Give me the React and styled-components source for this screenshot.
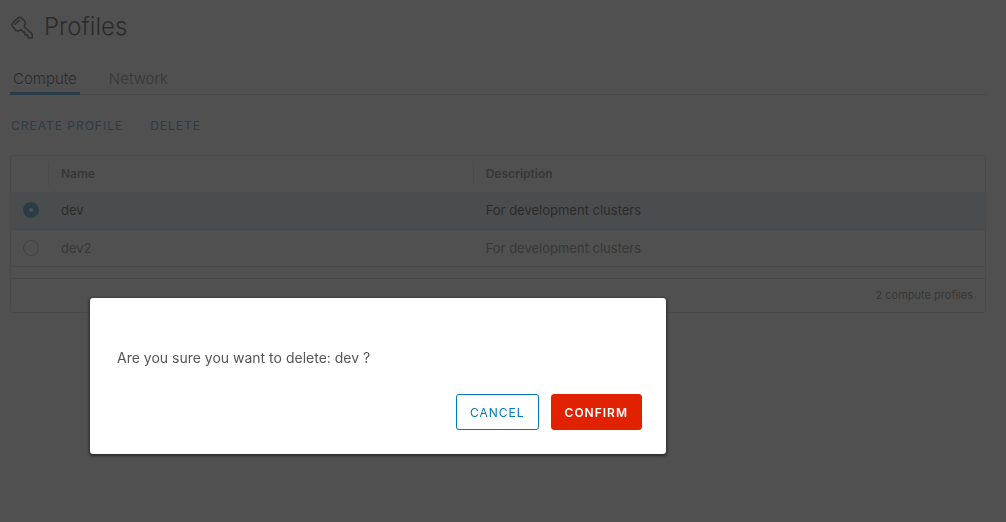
import React, { useState } from "react";
import styled, { createGlobalStyle } from "styled-components";

const GlobalStyle = createGlobalStyle`
  * { box-sizing: border-box; }
  body {
    margin: 0;
    background: #fafafa;
    color: #565656;
    font-family: Inter, "Open Sans", sans-serif;
    font-size: 13px;
    font-weight: 400;
  }
  button, input { font-family: inherit; }
`;

const Page = styled.main`
  padding: 12px 20px 0 10px;
`;

const Title = styled.h1`
  display: flex;
  align-items: center;
  gap: 9px;
  margin: 0;
  color: #000;
  font-size: 24px;
  font-weight: 300;
  line-height: 30px;
`;

const KeyIcon = styled.svg`
  width: 25px;
  height: 25px;
  fill: none;
  stroke: #222;
  stroke-width: 1.5;
  stroke-linejoin: round;
  stroke-linecap: round;
`;

const Tabs = styled.div`
  display: flex;
  gap: 26px;
  margin-top: 22px;
  border-bottom: 1px solid #ccc;
`;

const Tab = styled.button`
  height: 31px;
  margin-bottom: -1px;
  padding: 2px 3px 0;
  border: 0;
  border-bottom: 3px solid ${(p) => (p["aria-selected"] ? "#0079b8" : "transparent")};
  background: none;
  color: ${(p) => (p["aria-selected"] ? "#000" : "#565656")};
  font-size: 15px;
  font-weight: 300;
  line-height: 26px;
`;

const Toolbar = styled.div`
  display: flex;
  gap: 26px;
  margin-top: 12px;
`;

const LinkButton = styled.button`
  height: 36px;
  padding: 0 0 0 1px;
  border: 0;
  background: none;
  color: #0079b8;
  font-size: 12px;
  letter-spacing: 1px;
`;

const Grid = styled.section`
  margin-top: 12px;
  border: 1px solid #ccc;
  border-radius: 3px;
`;

const Table = styled.table`
  width: 100%;
  border-collapse: collapse;
  table-layout: fixed;
  text-align: left;
`;

const SelectCol = styled.col`
  width: 37px;
`;

const NameCol = styled.col`
  width: 43.6%;
`;

const HeadCell = styled.th`
  height: 36px;
  padding: 0;
  font-size: 12px;
  font-weight: 600;
`;

const HeadLabel = styled.div`
  height: 24px;
  padding-left: 12px;
  border-left: 1px solid #dedede;
  line-height: 24px;
`;

const Row = styled.tr`
  height: 37px;
  border-bottom: 1px solid #ccc;
  background: ${(p) => (p.$selected ? "#d9e4ea" : "transparent")};
  color: ${(p) => (p.$selected ? "#000" : "#565656")};
`;

const Cell = styled.td`
  padding: 0 13px;
  font-weight: 400;

  &:first-child {
    padding: 0 0 0 12px;
  }
`;

const Radio = styled.input`
  appearance: none;
  display: block;
  width: 16px;
  height: 16px;
  margin: 0;
  border: 1px solid #9a9a9a;
  border-radius: 50%;
  &:checked {
    border: 6px solid #0079b8;
    background: #fff;
  }
`;

const GridFooter = styled.footer`
  height: 34px;
  margin-top: 11px;
  padding: 0 12px;
  border-top: 1px solid #bbb;
  font-size: 11px;
  line-height: 33px;
  text-align: right;
`;

const Overlay = styled.div`
  position: fixed;
  inset: 0;
  padding: 298px 16px 0 90px;
  background: rgba(49, 49, 49, 0.85);
`;

const Modal = styled.div`
  max-width: 576px;
  padding: 48px 24px 24px 27px;
  border-radius: 3px;
  background: #fff;
  box-shadow: 0 1px 3px 1px rgba(0, 0, 0, 0.5);
`;

const Message = styled.p`
  margin: 0 0 24px;
  font-size: 14px;
  line-height: 24px;
`;

const Actions = styled.div`
  display: flex;
  justify-content: flex-end;
  gap: 12px;
`;

const Button = styled.button`
  height: 36px;
  padding: 0 13px;
  border: 1px solid ${(p) => (p.$danger ? "#e12200" : "#0079b8")};
  border-radius: 3px;
  background: ${(p) => (p.$danger ? "#e12200" : "#fff")};
  color: ${(p) => (p.$danger ? "#fff" : "#0079b8")};
  font-size: 12px;
  font-weight: ${(p) => (p.$danger ? 600 : 400)};
  letter-spacing: 1px;
`;

const profiles = [
  { name: "dev", description: "For development clusters" },
  { name: "dev2", description: "For development clusters" },
];

export default function App() {
  const [selected, setSelected] = useState("dev");
  return (
    <>
      <GlobalStyle />
      <Page>
        <Title>
          <KeyIcon viewBox="0 0 25 25" aria-hidden="true">
            <path d="M2.6 8.2 8.1 2.9Q9.3 1.8 10.7 2.6L14.8 6.2Q15.7 7.2 15.2 8.5L14.2 11.8 22.2 19V23H18.9L17.5 21.5V19.7H15.5L14.7 18.9V17L13.3 17.1 11.2 14.8 8 16Q6.7 16.3 5.8 15.2L2.2 11Q1.3 9.6 2.6 8.2Z" />
            <path d="M5.2 9.2 9.2 5.5" />
          </KeyIcon>
          Profiles
        </Title>
        <Tabs role="tablist">
          <Tab role="tab" aria-selected={true}>Compute</Tab>
          <Tab role="tab" aria-selected={false}>Network</Tab>
        </Tabs>
        <Toolbar>
          <LinkButton>CREATE PROFILE</LinkButton>
          <LinkButton>DELETE</LinkButton>
        </Toolbar>
        <Grid>
          <Table>
            <colgroup>
              <SelectCol />
              <NameCol />
              <col />
            </colgroup>
            <thead>
              <tr>
                <HeadCell aria-label="Select" />
                <HeadCell><HeadLabel>Name</HeadLabel></HeadCell>
                <HeadCell><HeadLabel>Description</HeadLabel></HeadCell>
              </tr>
            </thead>
            <tbody>
              {profiles.map(({ name, description }) => (
                <Row key={name} $selected={selected === name}>
                  <Cell>
                    <Radio
                      type="radio"
                      name="profile"
                      aria-label={name}
                      checked={selected === name}
                      onChange={() => setSelected(name)}
                    />
                  </Cell>
                  <Cell>{name}</Cell>
                  <Cell>{description}</Cell>
                </Row>
              ))}
            </tbody>
          </Table>
          <GridFooter>2 compute profiles</GridFooter>
        </Grid>
      </Page>
      <Overlay>
        <Modal role="dialog" aria-modal="true" aria-labelledby="delete-message">
          <Message id="delete-message">Are you sure you want to delete: dev ?</Message>
          <Actions>
            <Button>CANCEL</Button>
            <Button $danger>CONFIRM</Button>
          </Actions>
        </Modal>
      </Overlay>
    </>
  );
}
